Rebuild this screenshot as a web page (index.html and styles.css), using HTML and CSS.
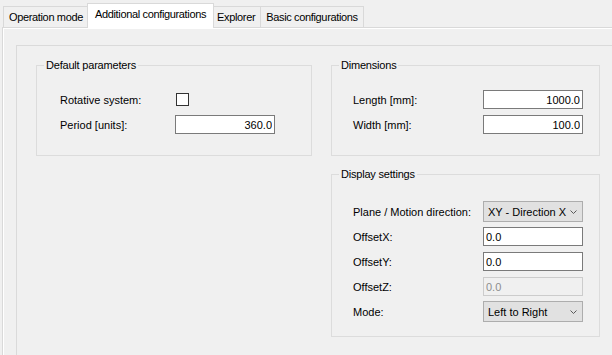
FILE: index.html
```html
<!DOCTYPE html>
<html lang="en">
<head>
    <meta charset="UTF-8">
    <title>Additional configurations</title>
    <link rel="stylesheet" href="styles.css">
</head>
<body>
    <div class="tabs">
        <div class="tab tab-first">Operation mode</div>
        <div class="tab active">Additional configurations</div>
        <div class="tab">Explorer</div>
        <div class="tab">Basic configurations</div>
    </div>

    <div class="tab-page">
        <div class="inner">
            <div class="columns">
                <div class="col-left">
                    <fieldset class="group">
                        <legend>Default parameters</legend>
                        <div class="group-body body-default">
                            <div class="row">
                                <label>Rotative system:</label>
                                <span class="checkbox"></span>
                            </div>
                            <div class="row">
                                <label>Period [units]:</label>
                                <input class="field num" value="360.0">
                            </div>
                        </div>
                    </fieldset>
                </div>

                <div class="col-right">
                    <fieldset class="group">
                        <legend>Dimensions</legend>
                        <div class="group-body body-dims">
                            <div class="row">
                                <label>Length [mm]:</label>
                                <input class="field num" value="1000.0">
                            </div>
                            <div class="row">
                                <label>Width [mm]:</label>
                                <input class="field num" value="100.0">
                            </div>
                        </div>
                    </fieldset>

                    <fieldset class="group group-display">
                        <legend>Display settings</legend>
                        <div class="group-body body-display">
                            <div class="row">
                                <label>Plane / Motion direction:</label>
                                <div class="select">
                                    <span>XY - Direction X</span>
                                    <svg width="7" height="4" viewBox="0 0 7 4"><polyline points="0.5,0.5 3.5,3.5 6.5,0.5" fill="none" stroke="#5a5a5a" stroke-width="1"/></svg>
                                </div>
                            </div>
                            <div class="row">
                                <label>OffsetX:</label>
                                <input class="field" value="0.0">
                            </div>
                            <div class="row">
                                <label>OffsetY:</label>
                                <input class="field" value="0.0">
                            </div>
                            <div class="row">
                                <label>OffsetZ:</label>
                                <input class="field" value="0.0" disabled>
                            </div>
                            <div class="row">
                                <label>Mode:</label>
                                <div class="select">
                                    <span>Left to Right</span>
                                    <svg width="7" height="4" viewBox="0 0 7 4"><polyline points="0.5,0.5 3.5,3.5 6.5,0.5" fill="none" stroke="#5a5a5a" stroke-width="1"/></svg>
                                </div>
                            </div>
                        </div>
                    </fieldset>
                </div>
            </div>
        </div>
    </div>
</body>
</html>
```

FILE: styles.css
```css
/* WinForms-like settings page */
body {
    margin: 0;
    width: 612px;
    height: 355px;
    overflow: hidden;
    background-color: #f0f0f0;
    font-family: "Liberation Sans", Arial, sans-serif;
    font-size: 11px;
    color: #000;
}

/* Tab strip */
.tabs {
    display: flex;
    align-items: flex-end;
    height: 27px;
    padding-left: 3px;
    letter-spacing: -0.35px;
}
.tab {
    box-sizing: border-box;
    height: 21px;
    line-height: 20px;
    padding: 0 5px;
    border: 1px solid #d9d9d9;
    border-bottom: none;
    margin-left: -1px;
    background-color: #f0f0f0;
    white-space: nowrap;
}
.tab-first {
    margin-left: 0;
}
.tab.active {
    position: relative;
    z-index: 1;
    height: 25px;
    margin: 0 -2px -1px -2px;
    padding: 0 7px;
    background-color: #fff;
}

/* Tab page */
.tab-page {
    margin-left: 2px;
    height: 400px;
    border-top: 1px solid #d9d9d9;
    border-left: 1px solid #d9d9d9;
    box-shadow: inset 1px 1px 0 #fff;
    padding: 17px 0 0 13px;
}
.inner {
    height: 400px;
    border-top: 1px solid #dadada;
    border-left: 1px solid #dadada;
    padding: 12px 0 0 19px;
}
.columns {
    display: flex;
    gap: 19px;
}
.col-left {
    width: 276px;
}
.col-right {
    width: 269px;
}

/* Group boxes */
.group {
    margin: 0;
    padding: 0;
    border: 1px solid #dcdcdc;
}
.group legend {
    margin-left: 7px;
    padding: 0 2px;
    line-height: 14px;
    letter-spacing: -0.2px;
}
.group-display {
    margin-top: 11px;
}
.group-body {
    display: flex;
    flex-direction: column;
    gap: 4px;
}
.body-default {
    padding: 17px 0 20px 23px;
}
.body-dims {
    padding: 17px 0 20px 21px;
}
.body-display {
    padding: 20px 0 14px 21px;
}
.row {
    display: flex;
    align-items: center;
    height: 21px;
}
.body-default label {
    width: 115px;
}
.body-dims label,
.body-display label {
    width: 130px;
}

/* Controls */
.checkbox {
    box-sizing: border-box;
    width: 13px;
    height: 13px;
    margin-left: 1px;
    border: 1px solid #333;
    background-color: #fff;
}
.field {
    box-sizing: border-box;
    width: 100px;
    height: 19px;
    margin: 0;
    padding: 0 2px;
    border: 1px solid #7a7a7a;
    background-color: #fff;
    font-family: inherit;
    font-size: 11px;
    color: #000;
    outline: none;
}
.num {
    text-align: right;
}
.field:disabled {
    border-color: #cccccc;
    background-color: #f0f0f0;
    color: #8d8d8d;
}
.select {
    box-sizing: border-box;
    display: flex;
    align-items: center;
    justify-content: space-between;
    width: 100px;
    height: 21px;
    padding: 0 5px 0 4px;
    border: 1px solid #adadad;
    background-color: #e1e1e1;
}
.select svg {
    display: block;
}
```
